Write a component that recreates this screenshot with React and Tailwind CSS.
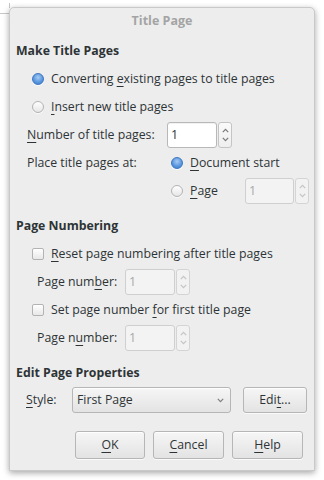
import React from "react";

const F = { fontFamily: '"Open Sans", "Noto Sans", sans-serif' };

function U({ children }) {
  return <span className="underline underline-offset-[3px] decoration-1">{children}</span>;
}

function Radio({ on }) {
  return on ? (
    <span className="inline-block shrink-0 w-[12px] h-[12px] rounded-full border border-[#3d77c0] bg-[radial-gradient(circle_at_50%_35%,#a9cbf2_0%,#5b98e0_55%,#3b7bc8_100%)] shadow-[0_1px_0_rgba(255,255,255,0.8)]" />
  ) : (
    <span className="inline-block shrink-0 w-[12px] h-[12px] rounded-full border border-[#b3b3b3] bg-[linear-gradient(#ffffff,#e6e6e6)] shadow-[0_1px_0_rgba(255,255,255,0.8)]" />
  );
}

function Check() {
  return (
    <span className="inline-block shrink-0 w-[12px] h-[12px] rounded-[2px] border border-[#b3b3b3] bg-[linear-gradient(#ffffff,#e8e8e8)]" />
  );
}

function Chev({ up, color = "#7b7b7b" }) {
  return (
    <svg width="7" height="5" viewBox="0 0 7 5">
      {up ? (
        <path d="M0.8 4.2 L3.5 1.3 L6.2 4.2" fill="none" stroke={color} strokeWidth="1.2" />
      ) : (
        <path d="M0.8 0.8 L3.5 3.7 L6.2 0.8" fill="none" stroke={color} strokeWidth="1.2" />
      )}
    </svg>
  );
}

function Spin({ disabled, w = 50 }) {
  return (
    <div className="flex h-[26px] gap-[1px]">
      <div
        className={
          "h-full rounded-[3px] border flex items-center pl-[3px] text-[12.5px] " +
          (disabled
            ? "border-[#cfcfcf] bg-[#f3f3f3] text-[#a8a8a8]"
            : "border-[#b8b8b8] bg-white text-[#2e3436] shadow-[inset_0_1px_1px_rgba(0,0,0,0.06)]")
        }
        style={{ width: w }}
      >
        1
      </div>
      <div
        className={
          "w-[14px] h-full rounded-[3px] border flex flex-col items-center justify-between py-[5px] " +
          (disabled ? "border-[#d4d4d4] bg-[#f2f2f2]" : "border-[#c4c4c4] bg-[linear-gradient(#fafafa,#eeeeee)]")
        }
      >
        <Chev up color={disabled ? "#c4c4c4" : "#7b7b7b"} />
        <Chev color={disabled ? "#c4c4c4" : "#7b7b7b"} />
      </div>
    </div>
  );
}

function Btn({ children, w }) {
  return (
    <div
      className="h-full rounded-[3px] border border-[#b6b6b6] bg-[linear-gradient(#f6f6f6,#e3e3e3)] shadow-[inset_0_1px_0_rgba(255,255,255,0.9),0_1px_0_rgba(255,255,255,0.7)] flex items-center justify-center text-[12.3px] text-[#2e3436]"
      style={{ width: w }}
    >
      {children}
    </div>
  );
}

export default function App() {
  return (
    <div className="relative w-[324px] h-[480px] bg-white overflow-hidden" style={F}>
      <div className="absolute left-0 top-[13px] w-[9px] h-[1px] bg-[#c8c8c8]" />
      <div className="absolute left-[9px] top-[3px] w-[1px] h-[5px] bg-[#c8c8c8]" />
      <div className="absolute left-[9px] top-[7px] w-[306px] h-[464px] bg-[#ededed] rounded-t-[5px] border border-[#c9c9c9] shadow-[0_2px_6px_rgba(0,0,0,0.35)] text-[#2e3436] text-[12.3px] flex flex-col">
        <div className="h-[27px] flex items-center justify-center font-bold text-[#a4a4a4] text-[12.5px]">Title Page</div>

        <div className="mt-[3px] h-[27px] pl-[6px] flex items-center font-bold">Make Title Pages</div>

        <div className="h-[28px] pl-[22px] flex items-center gap-[7px]">
          <Radio on />
          <span>Converting <U>e</U>xisting pages to title pages</span>
        </div>
        <div className="h-[28px] pl-[22px] flex items-center gap-[7px]">
          <Radio />
          <span><U>I</U>nsert new title pages</span>
        </div>
        <div className="h-[28px] pl-[17px] flex items-center">
          <span className="w-[140px]"><U>N</U>umber of title pages:</span>
          <Spin />
        </div>
        <div className="h-[28px] pl-[17px] flex items-center">
          <span className="w-[144px]">Place title pages at:</span>
          <Radio on />
          <span className="ml-[7px]"><U>D</U>ocument start</span>
        </div>
        <div className="h-[28px] pl-[161px] flex items-center">
          <Radio />
          <span className="ml-[7px] w-[55px]"><U>P</U>age</span>
          <Spin disabled w={49} />
        </div>

        <div className="mt-[7px] h-[28px] pl-[6px] flex items-center font-bold">Page Numbering</div>
        <div className="h-[28px] pl-[22px] flex items-center gap-[7px]">
          <Check />
          <span><U>R</U>eset page numbering after title pages</span>
        </div>
        <div className="h-[28px] pl-[27px] flex items-center">
          <span className="w-[88px]">Page num<U>b</U>er:</span>
          <Spin disabled w={50} />
        </div>
        <div className="h-[28px] pl-[22px] flex items-center gap-[7px]">
          <Check />
          <span>Set page number <U>f</U>or first title page</span>
        </div>
        <div className="h-[28px] pl-[27px] flex items-center">
          <span className="w-[88px]">Page n<U>u</U>mber:</span>
          <Spin disabled w={50} />
        </div>

        <div className="mt-[7px] h-[28px] pl-[6px] flex items-center font-bold">Edit Page Properties</div>
        <div className="h-[26px] pl-[16px] flex items-center">
          <span className="w-[46px]"><U>S</U>tyle:</span>
          <div className="w-[159px] h-full rounded-[3px] border border-[#b6b6b6] bg-[linear-gradient(#f6f6f6,#e3e3e3)] shadow-[inset_0_1px_0_rgba(255,255,255,0.9)] flex items-center justify-between pl-[4px] pr-[6px]">
            <span>First Page</span>
            <Chev color="#808080" />
          </div>
          <div className="ml-[12px] h-full">
            <Btn w={64}>Edi<U>t</U>...</Btn>
          </div>
        </div>

        <div className="mt-[18px] h-[28px] pr-[11px] flex justify-end gap-[8px]">
          <Btn w={70}><U>O</U>K</Btn>
          <Btn w={71}><U>C</U>ancel</Btn>
          <Btn w={71}><U>H</U>elp</Btn>
        </div>
      </div>
    </div>
  );
}
